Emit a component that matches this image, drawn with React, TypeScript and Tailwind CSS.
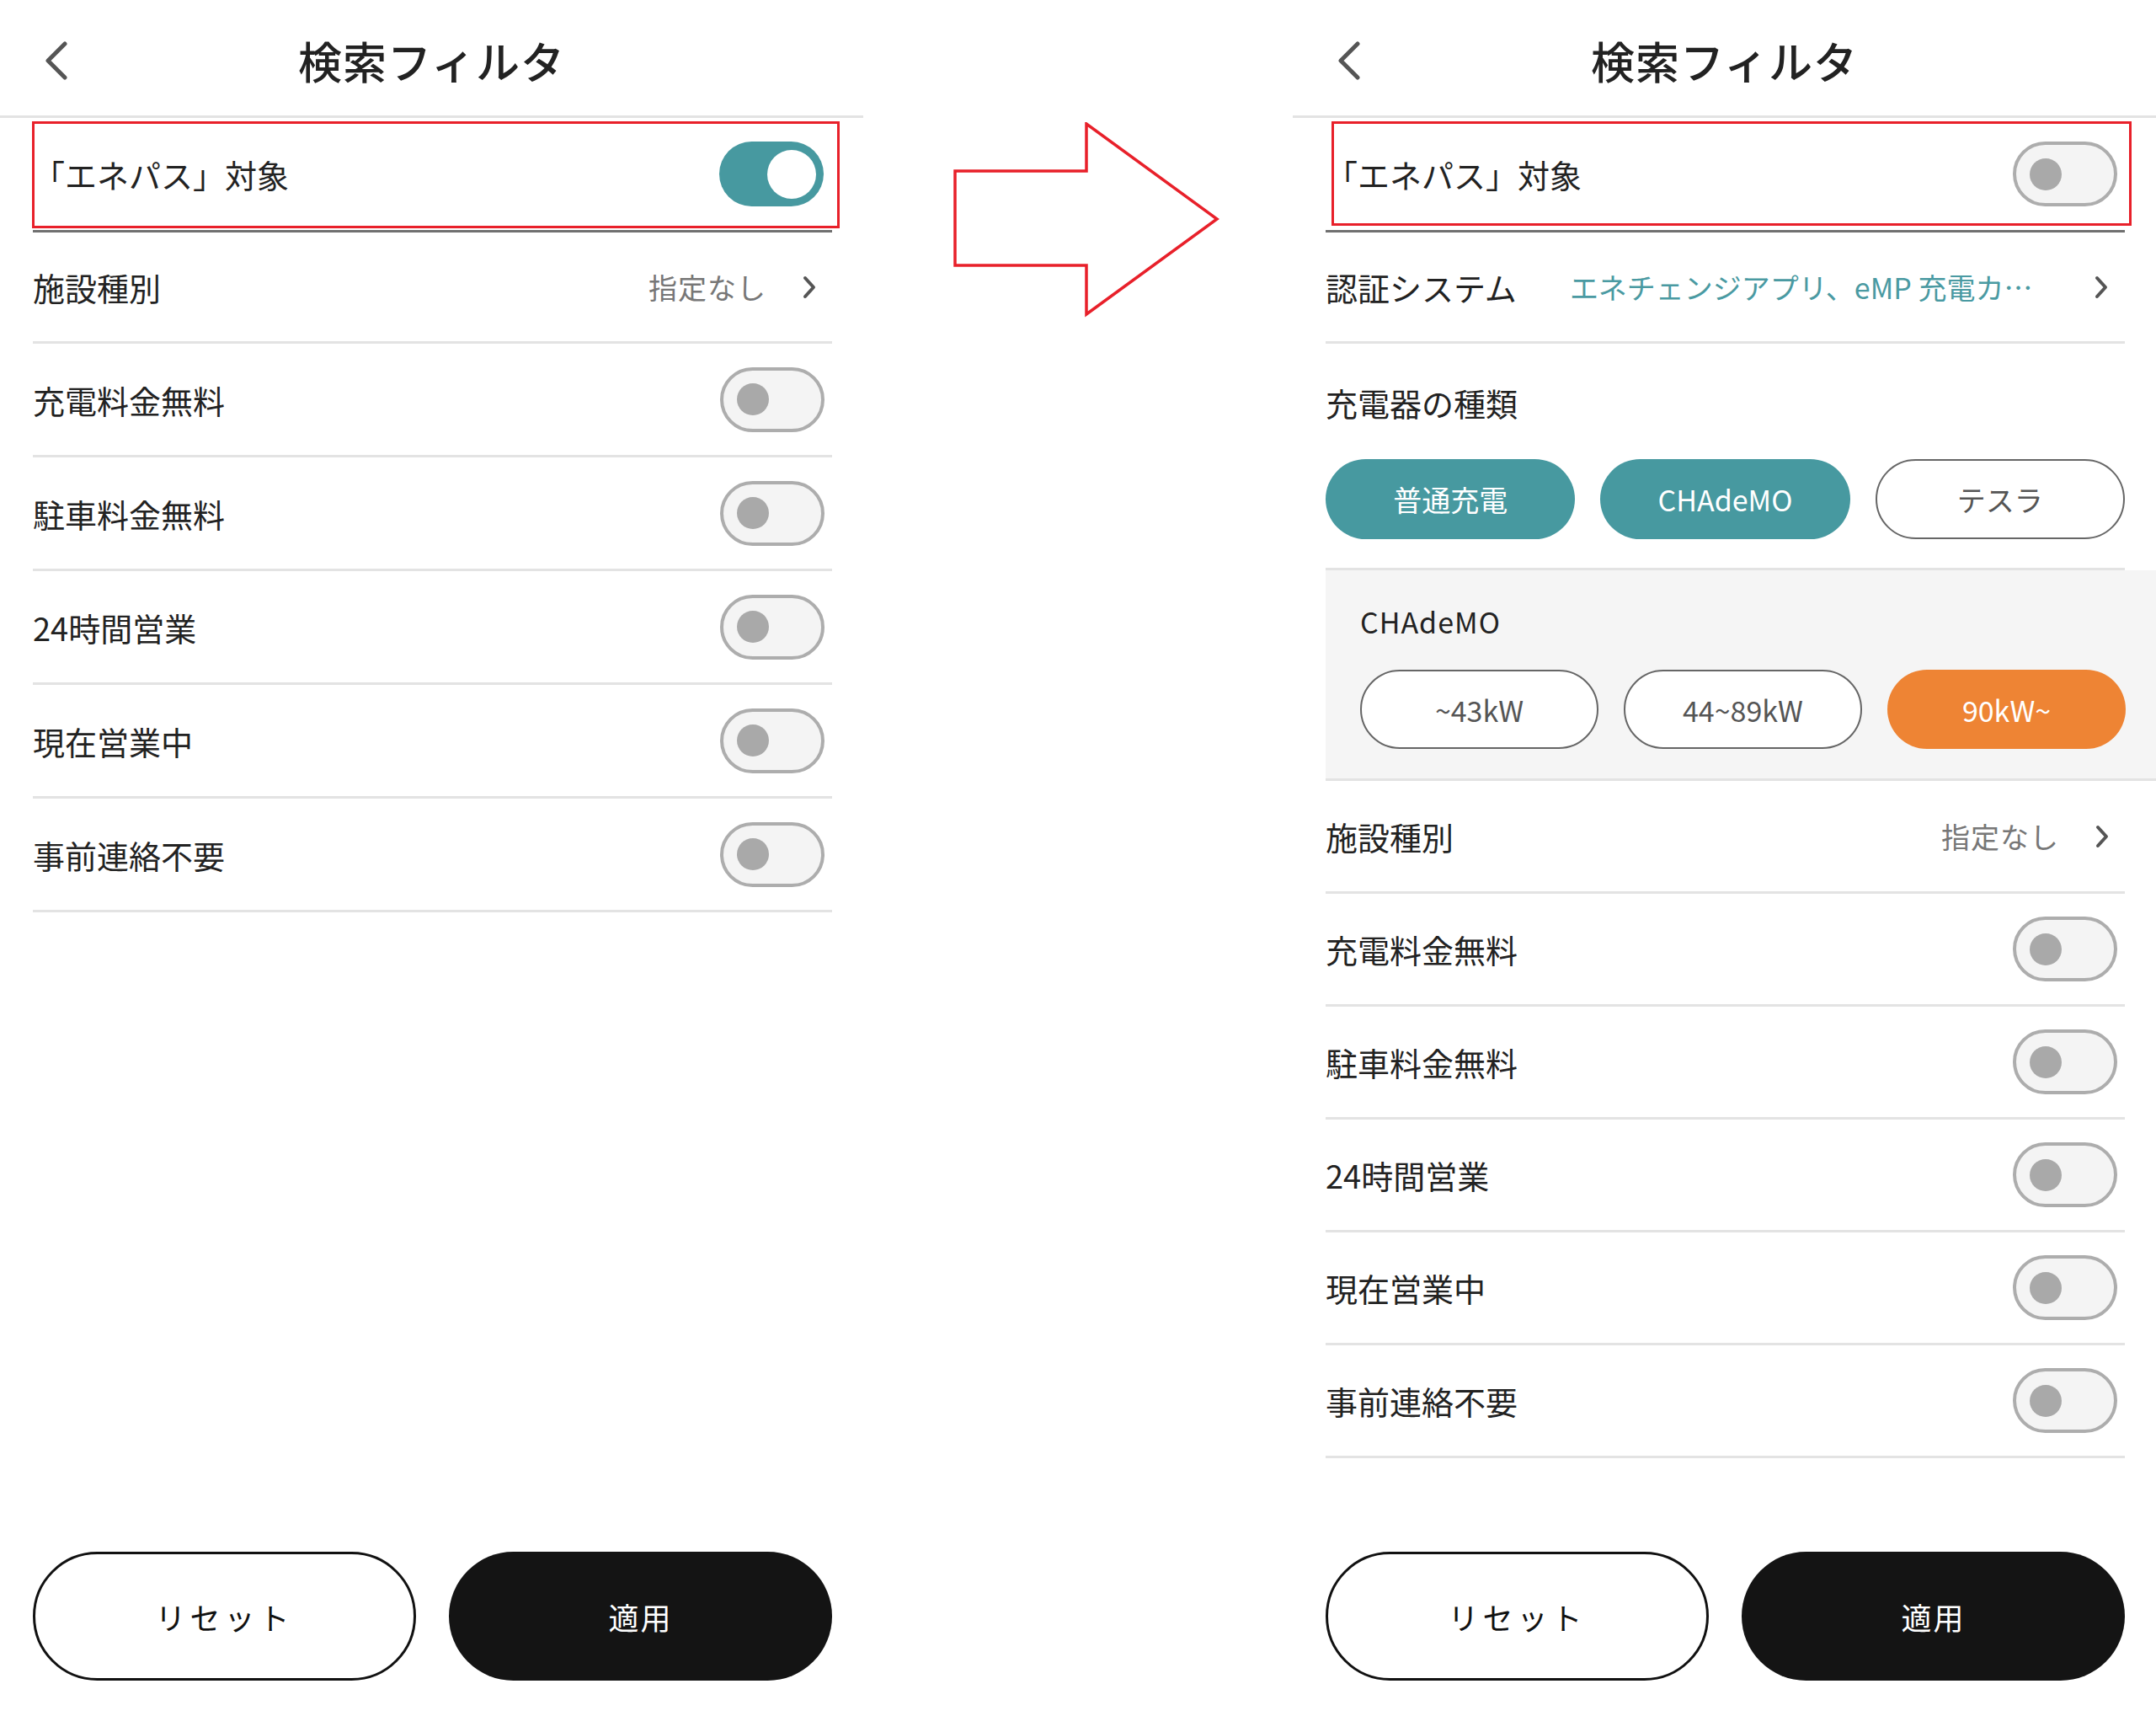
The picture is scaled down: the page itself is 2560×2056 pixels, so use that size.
import React from 'react';

type ToggleProps = { on: boolean };

const Toggle = ({ on }: ToggleProps) =>
  on ? (
    <div className="mr-[10px] w-[124px] h-[77px] rounded-full bg-[#4799a0] flex items-center justify-end pr-[9px]">
      <div className="w-[58px] h-[58px] rounded-full bg-white" />
    </div>
  ) : (
    <div className="mr-[9px] w-[124px] h-[77px] rounded-full bg-[#f4f4f4] border-[4px] border-[#adadad] flex items-center pl-[16px]">
      <div className="w-[38px] h-[38px] rounded-full bg-[#a9a9a9]" />
    </div>
  );

const SmallChevron = () => (
  <svg width="18" height="30" viewBox="0 0 18 30" className="shrink-0">
    <path d="M4 4 L14 15 L4 26" fill="none" stroke="#555" strokeWidth="4" strokeLinecap="round" strokeLinejoin="round" />
  </svg>
);

const Header = () => (
  <div className="h-[140px] border-b-[3px] border-[#e3e3e3] grid grid-cols-[1fr_auto_1fr] items-center pt-[6px]">
    <div className="pl-[53px]">
      <svg width="28" height="46" viewBox="0 0 28 46">
        <path d="M24 3 L4 23 L24 43" fill="none" stroke="#555" strokeWidth="5" strokeLinecap="round" strokeLinejoin="round" />
      </svg>
    </div>
    <div className="text-[52px] font-medium text-[#222] tracking-[1px]">検索フィルタ</div>
    <div />
  </div>
);

type EnepassProps = { on: boolean; boxClass: string };

const EnepassRow = ({ on, boxClass }: EnepassProps) => (
  <div className="relative">
    <div className="ml-[39px] mr-[37px] h-[136px] border-b-[3px] border-[#707070] flex items-center justify-between">
      <span className="text-[38px] text-[#222]">「エネパス」対象</span>
      <Toggle on={on} />
    </div>
    <div className={`absolute top-[4px] border-[3px] border-[#e8202a] ${boxClass}`} />
  </div>
);

type RowProps = { label: string; h: string; children: React.ReactNode };

const Row = ({ label, h, children }: RowProps) => (
  <div className={`ml-[39px] mr-[37px] border-b-[3px] border-[#e3e3e3] flex items-center justify-between ${h}`}>
    <span className="text-[38px] text-[#222]">{label}</span>
    {children}
  </div>
);

const FacilityRow = ({ h }: { h: string }) => (
  <Row label="施設種別" h={h}>
    <div className="flex items-center gap-[42px] mr-[18px]">
      <span className="text-[34px] text-[#777] tracking-[1px]">指定なし</span>
      <SmallChevron />
    </div>
  </Row>
);

const toggleLabels = ['充電料金無料', '駐車料金無料', '24時間営業', '現在営業中', '事前連絡不要'];

const Buttons = () => (
  <div className="mt-auto ml-[39px] mr-[37px] mb-[61px] grid grid-cols-2 gap-[39px]">
    <button className="h-[153px] rounded-full border-[3px] border-[#111] bg-white text-[36px] text-[#111] tracking-[5px]">
      リセット
    </button>
    <button className="h-[153px] rounded-full bg-[#141414] text-[36px] text-white tracking-[2px]">
      適用
    </button>
  </div>
);

type ChipProps = { label: string; kind: 'teal' | 'orange' | 'plain' };

const Chip = ({ label, kind }: ChipProps) => {
  if (kind === 'teal')
    return (
      <div className="h-full rounded-full bg-[#4799a0] text-white flex items-center justify-center text-[34px]">
        {label}
      </div>
    );
  if (kind === 'orange')
    return (
      <div className="h-full rounded-full bg-[#ee8434] text-white flex items-center justify-center text-[34px]">
        {label}
      </div>
    );
  return (
    <div className="h-full rounded-full bg-white border-[2px] border-[#666] text-[#555] flex items-center justify-center text-[34px]">
      {label}
    </div>
  );
};

const LeftPanel = () => (
  <div className="w-[1025px] h-[2056px] flex flex-col shrink-0">
    <Header />
    <EnepassRow on={true} boxClass="left-[38px] right-[28px] h-[127px]" />
    <FacilityRow h="h-[132px]" />
    {toggleLabels.map((label) => (
      <Row key={label} label={label} h="h-[135px]">
        <Toggle on={false} />
      </Row>
    ))}
    <Buttons />
  </div>
);

const RightPanel = () => (
  <div className="w-[1025px] h-[2056px] flex flex-col shrink-0">
    <Header />
    <EnepassRow on={false} boxClass="left-[46px] right-[29px] h-[124px]" />
    <Row label="認証システム" h="h-[132px]">
      <div className="flex-1 flex items-center ml-[63px] mr-[19px]">
        <span className="text-[34px] text-[#4a9aa2] flex-1">エネチェンジアプリ、eMP 充電カ…</span>
        <SmallChevron />
      </div>
    </Row>
    <div className="ml-[39px] mr-[37px] h-[269px] border-b-[3px] border-[#e3e3e3] flex flex-col pt-[50px]">
      <span className="text-[38px] leading-[40px] text-[#222]">充電器の種類</span>
      <div className="mt-[47px] h-[95px] grid grid-cols-3 gap-[30px]">
        <Chip label="普通充電" kind="teal" />
        <Chip label="CHAdeMO" kind="teal" />
        <Chip label="テスラ" kind="plain" />
      </div>
    </div>
    <div className="ml-[39px] h-[250px] bg-[#f5f5f5] border-b-[3px] border-[#e3e3e3] flex flex-col pt-[41px] pl-[41px] pr-[36px]">
      <span className="text-[34px] leading-[40px] text-[#222] tracking-[1px]">CHAdeMO</span>
      <div className="mt-[37px] h-[94px] grid grid-cols-3 gap-[30px]">
        <Chip label="~43kW" kind="plain" />
        <Chip label="44~89kW" kind="plain" />
        <Chip label="90kW~" kind="orange" />
      </div>
    </div>
    <FacilityRow h="h-[134px]" />
    {toggleLabels.map((label) => (
      <Row key={label} label={label} h="h-[134px]">
        <Toggle on={false} />
      </Row>
    ))}
    <Buttons />
  </div>
);

const Arrow = () => (
  <div className="w-[510px] shrink-0 pl-[107px] pt-[145px]">
    <svg width="318" height="232" viewBox="0 0 318 232">
      <polygon
        points="2,58 158,58 158,2 313,115 158,228 158,170 2,170"
        fill="white"
        stroke="#e8202a"
        strokeWidth="3.5"
        strokeLinejoin="miter"
      />
    </svg>
  </div>
);

export default function App() {
  return (
    <div className="w-[2560px] h-[2056px] bg-white flex font-['Noto_Sans_CJK_JP',sans-serif] overflow-hidden">
      <LeftPanel />
      <Arrow />
      <RightPanel />
    </div>
  );
}
